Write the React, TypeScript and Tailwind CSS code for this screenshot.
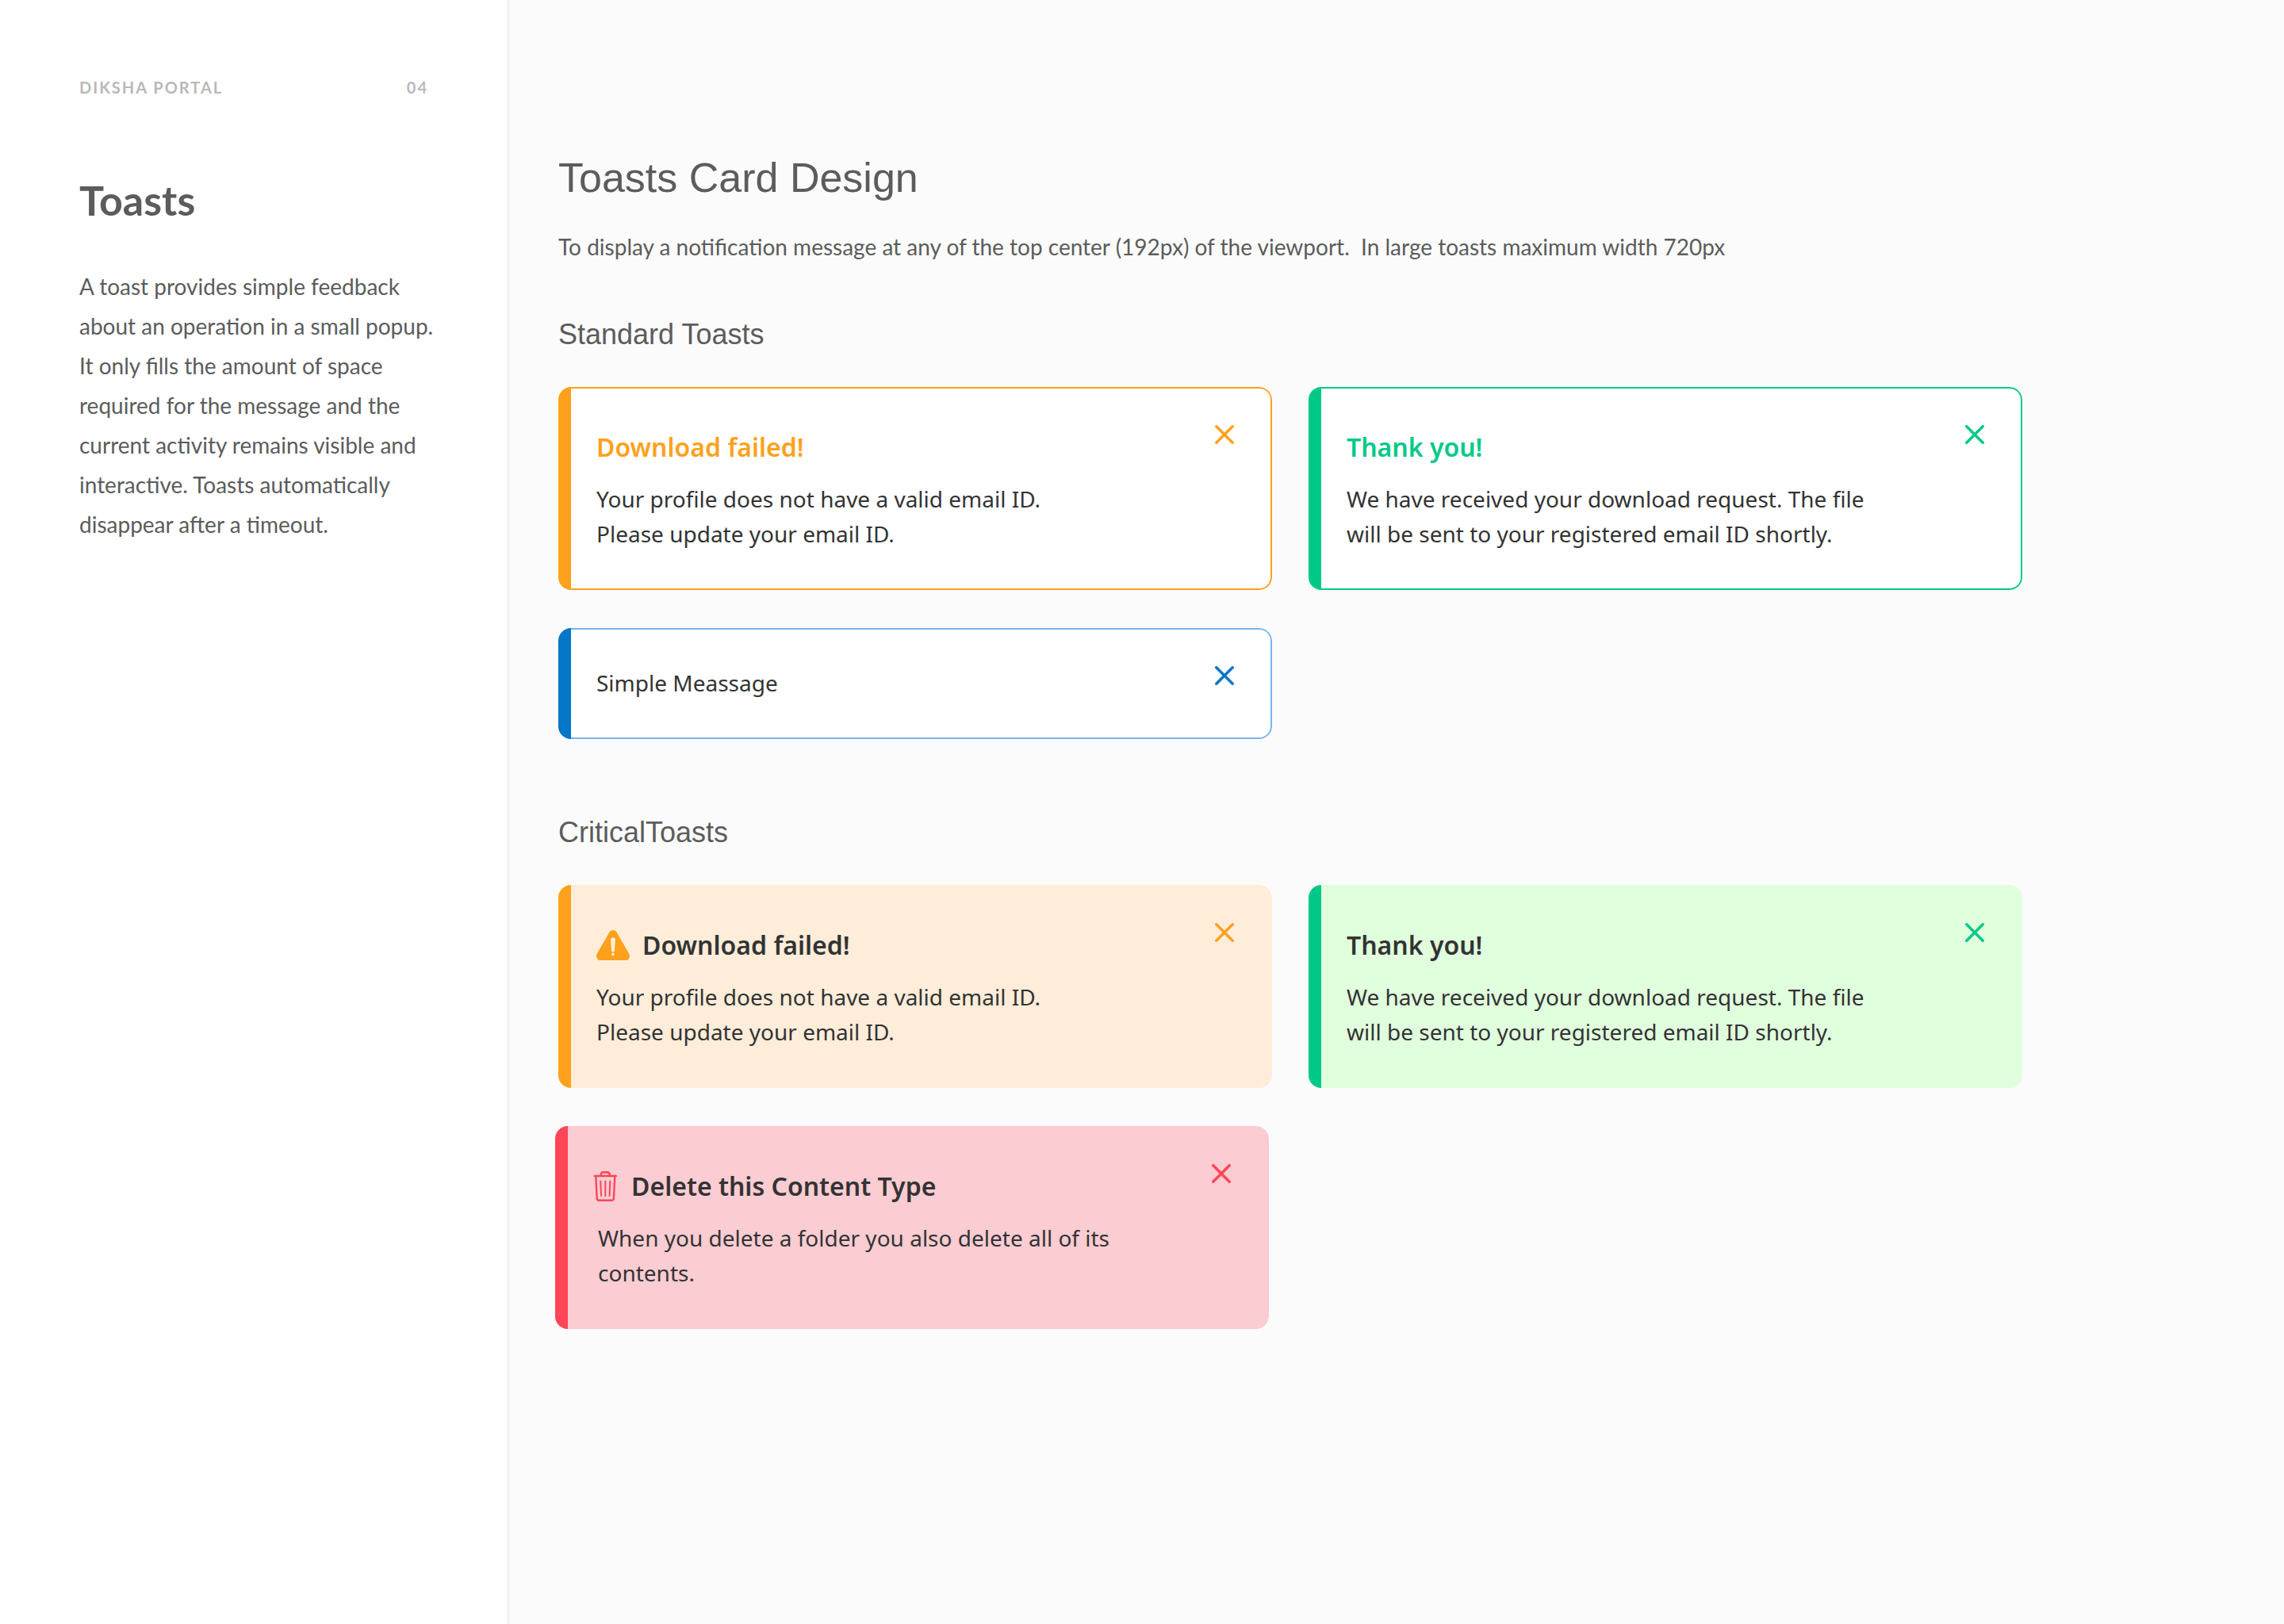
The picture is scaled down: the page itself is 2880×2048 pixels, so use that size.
import type { ReactNode } from "react";

type Tone = {
  card: string;
  bar: string;
  title: string;
  icon: string;
};

const standardWarning: Tone = {
  card: "border-[#ffa11d] bg-white",
  bar: "bg-[#ffa11d]",
  title: "text-[#ffa11d]",
  icon: "text-[#ffa11d]",
};
const standardSuccess: Tone = {
  card: "border-[#00c987] bg-white",
  bar: "bg-[#00c987]",
  title: "text-[#00c987]",
  icon: "text-[#00c987]",
};
const standardInfo: Tone = {
  card: "border-[#79b4ee] bg-white",
  bar: "bg-[#0576c8]",
  title: "text-[#333333]",
  icon: "text-[#0576c8]",
};
const criticalWarning: Tone = {
  card: "border-[#ffedd9] bg-[#ffedd9]",
  bar: "bg-[#ffa11d]",
  title: "text-[#333333]",
  icon: "text-[#ffa11d]",
};
const criticalSuccess: Tone = {
  card: "border-[#e0ffdd] bg-[#e0ffdd]",
  bar: "bg-[#00c987]",
  title: "text-[#333333]",
  icon: "text-[#00c987]",
};
const criticalError: Tone = {
  card: "border-[#fbccd2] bg-[#fbccd2]",
  bar: "bg-[#ff4558]",
  title: "text-[#333333]",
  icon: "text-[#ff4558]",
};

function CloseIcon() {
  return (
    <svg viewBox="0 0 24 24" className="size-6" fill="none" stroke="currentColor" strokeWidth="3.5" strokeLinecap="round" aria-hidden="true">
      <path d="M1.8 1.8 22.2 22.2M22.2 1.8 1.8 22.2" />
    </svg>
  );
}

function WarningIcon() {
  return (
    <svg viewBox="0 0 42 38" className="h-[38px] w-[42px] shrink-0" aria-hidden="true">
      <path
        fill="#ffa11d"
        d="M16.3 2.700.9 29.600C-1.200 33.400 1 38 5.300 38h31.400c4.300 0 6.500-4.600 4.400-8.400L25.700 2.700c-2.100-3.600-7.300-3.600-9.400 0Z"
      />
      <path fill="#ffedd9" d="M18.100 12c0-3.600 5.800-3.600 5.800 0l-1 14c-.2 2-3.600 2-3.800 0Z" />
      <circle fill="#ffedd9" cx="21" cy="30.400" r="1.800" />
    </svg>
  );
}

function TrashIcon() {
  return (
    <svg viewBox="0 0 32 38" className="h-[38px] w-8 shrink-0" fill="none" stroke="#ff4558" strokeWidth="2.400" strokeLinecap="round" strokeLinejoin="round" aria-hidden="true">
      <path d="M1.800 6h27" />
      <path d="M9.700 5.800V5c0-2.500 1.300-3.800 3.300-3.800h4.600c2 0 3.300 1.300 3.300 3.800v.8" />
      <path d="M3.300 6 4.700 34.200c.1 1.800 1 2.600 2.500 2.600h16.200c1.500 0 2.400-.8 2.500-2.600L27.300 6" />
      <path strokeWidth="2" d="M9.300 12.500 10 31M15.300 12.500V31M21.300 12.500 20.600 31" />
    </svg>
  );
}

type ToastProps = {
  tone: Tone;
  title?: string;
  icon?: ReactNode;
  message?: string;
  children: ReactNode;
};

function Toast({ tone, title, icon, message = "", children }: ToastProps) {
  return (
    <article className="relative flex overflow-hidden rounded-2xl">
      <div className={`w-4 shrink-0 ${tone.bar}`} />
      <div className={`min-w-0 flex-1 rounded-r-2xl border-2 border-l-0 pt-[45px] pr-32 pb-[47px] pl-8 ${tone.card}`}>
        {title && (
          <div className="mb-3.5 flex items-center gap-4">
            {icon}
            <h3 className={`text-[32px] leading-[58px] font-semibold ${tone.title}`}>{title}</h3>
          </div>
        )}
        <p className={`max-w-[668px] text-[28px] leading-11 text-[#333333] ${message}`}>{children}</p>
      </div>
      <button type="button" aria-label="Dismiss" className={`absolute top-12 right-12 ${tone.icon}`}>
        <CloseIcon />
      </button>
    </article>
  );
}

export default function App() {
  return (
    <div className="flex min-h-screen bg-[#fbfbfb] text-[#5b5c5c]">
      <aside className="relative w-[640px] shrink-0 bg-white px-[100px] pt-24 font-[Lato,sans-serif] shadow-[1px_0_3px_rgba(0,0,0,0.1)]">
        <div className="flex justify-between text-[20px] leading-7 font-bold tracking-[2px] text-[#b9b9b9]">
          <span>DIKSHA PORTAL</span>
          <span>04</span>
        </div>
        <h1 className="mt-24 text-[52px] leading-16 font-bold">Toasts</h1>
        <p className="mt-13 text-[28px] leading-[50px] whitespace-nowrap">
          A toast provides simple feedback
          <br />
          about an operation in a small popup.
          <br />
          It only fills the amount of space
          <br />
          required for the message and the
          <br />
          current activity remains visible and
          <br />
          interactive. Toasts automatically
          <br />
          disappear after a timeout.
        </p>
      </aside>

      <main className="min-w-0 flex-1 pt-48 pr-[330px] pl-16 font-['Noto_Sans',sans-serif]">
        <h2 className="font-['Liberation_Sans',sans-serif] text-[52px] leading-16">Toasts Card Design</h2>
        <p className="mt-[30px] font-[Lato,sans-serif] text-[28px] leading-[50px] whitespace-pre-wrap">
          {"To display a notification message at any of the top center (192px) of the viewport.  In large toasts maximum width 720px"}
        </p>

        <section>
          <h2 className="mt-16 font-['Liberation_Sans',sans-serif] text-[36px] leading-11">Standard Toasts</h2>
          <div className="mt-11 grid grid-cols-2 gap-x-[46px] gap-y-12">
            <Toast tone={standardWarning} title="Download failed!">
              Your profile does not have a valid email ID.
              <br />
              Please update your email ID.
            </Toast>
            <Toast tone={standardSuccess} title="Thank you!">
              We have received your download request. The file will be sent to your registered email ID shortly.
            </Toast>
            <Toast tone={standardInfo}>Simple Meassage</Toast>
          </div>
        </section>

        <section>
          <h2 className="mt-24 font-['Liberation_Sans',sans-serif] text-[36px] leading-11">CriticalToasts</h2>
          <div className="mt-11 grid grid-cols-2 gap-x-[46px] gap-y-12">
            <Toast tone={criticalWarning} title="Download failed!" icon={<WarningIcon />}>
              Your profile does not have a valid email ID.
              <br />
              Please update your email ID.
            </Toast>
            <Toast tone={criticalSuccess} title="Thank you!">
              We have received your download request. The file will be sent to your registered email ID shortly.
            </Toast>
            <div className="mr-1 -ml-1">
              <Toast tone={criticalError} title="Delete this Content Type" icon={<TrashIcon />} message="pl-1.5">
                When you delete a folder you also delete all of its contents.
              </Toast>
            </div>
          </div>
        </section>
      </main>
    </div>
  );
}
